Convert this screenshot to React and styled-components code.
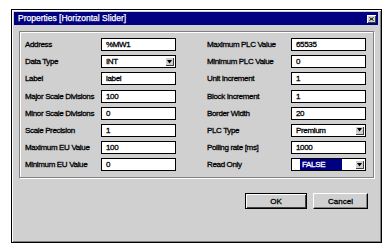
import React from "react";
import styled, { createGlobalStyle } from "styled-components";

const Global = createGlobalStyle`
  html, body { margin: 0; padding: 0; background: #ffffff; }
  body { font-family: "Liberation Sans", Arial, sans-serif; }
`;

const FACE = "#d0d0d0";

const Window = styled.div`
  box-sizing: border-box;
  margin: 9px 0 0 11px;
  width: 371px;
  height: 234px;
  background: ${FACE};
  border: 1px solid #000;
  box-shadow: inset 1px 1px 0 #ffffff, inset -1px -1px 0 #808080;
  padding: 2px;
  display: flex;
  flex-direction: column;
`;

const TitleBar = styled.div`
  height: 13px;
  margin-right: 1px;
  background: #000080;
  display: flex;
  align-items: center;
  justify-content: space-between;
  padding: 0 2px 0 4px;
`;

const Title = styled.span`
  color: #ffffff;
  font-size: 8.5px;
  line-height: 13px;
  white-space: nowrap;
  -webkit-text-stroke: 0.25px #ffffff;
`;

const CloseBtn = styled.div`
  box-sizing: border-box;
  width: 9px;
  height: 8px;
  margin-top: 1px;
  background: ${FACE};
  box-shadow: inset 1px 1px 0 #fff, inset -1px -1px 0 #404040;
  display: flex;
  align-items: center;
  justify-content: center;
`;

const Group = styled.div`
  box-sizing: border-box;
  margin: 6px 0 0 5px;
  width: 355px;
  height: 147px;
  border: 1px solid #808080;
  box-shadow: inset 1px 1px 0 #ffffff, 1px 1px 0 #ffffff;
  padding: 6px 0 0 5px;
  display: flex;
  gap: 31px;
`;

const Column = styled.div`
  display: grid;
  grid-template-columns: ${(p) => p.$label}px 75px;
  grid-auto-rows: 13px;
  row-gap: 4.2px;
  align-items: center;
`;

const Label = styled.div`
  font-size: 8px;
  letter-spacing: -0.35px;
  color: #000;
  white-space: nowrap;
  -webkit-text-stroke: 0.3px #000;
`;

const Field = styled.div`
  box-sizing: border-box;
  height: 13px;
  background: #fff;
  border: 1px solid #000;
  display: flex;
  align-items: center;
  font-size: 8px;
  letter-spacing: -0.35px;
  color: #000;
  -webkit-text-stroke: 0.3px #000;
  padding-left: ${(p) => (p.$select ? 0 : 4)}px;
  white-space: nowrap;
  overflow: hidden;
`;

const FieldText = styled.span`
  flex: 1;
  padding-left: 4px;
`;

const Selected = styled.span`
  margin-left: 8px;
  width: 42px;
  height: 100%;
  background: #000080;
  color: #fff;
  -webkit-text-stroke: 0.3px #fff;
  padding-left: 2px;
  box-sizing: border-box;
  display: flex;
  align-items: center;
  margin-right: auto;
`;

const ArrowBtn = styled.div`
  box-sizing: border-box;
  width: 9px;
  height: 9px;
  margin-right: 1px;
  background: ${FACE};
  box-shadow: inset 1px 1px 0 #fff, inset -1px -1px 0 #404040;
  display: flex;
  align-items: center;
  justify-content: center;
`;

const ButtonRow = styled.div`
  display: flex;
  justify-content: flex-end;
  gap: 6px;
  margin-top: 15px;
  padding-right: 11px;
`;

const Button = styled.div`
  box-sizing: border-box;
  width: ${(p) => p.$w}px;
  height: 16px;
  background: ${FACE};
  font-size: 8px;
  color: #000;
  -webkit-text-stroke: 0.3px #000;
  display: flex;
  align-items: center;
  justify-content: center;
  border: 1px solid;
  border-color: ${(p) => (p.$default ? "#000" : "#fff #000 #000 #fff")};
  box-shadow: ${(p) =>
    p.$default
      ? "inset 1px 1px 0 #fff, inset -1px -1px 0 #404040"
      : "inset -1px -1px 0 #808080"};
`;

const Arrow = () => (
  <svg width="5" height="4" viewBox="0 0 5 4">
    <polygon points="0,0 5,0 2.5,3.5" fill="#000" />
  </svg>
);

const CloseIcon = () => (
  <svg width="5" height="4" viewBox="0 0 5 4">
    <path d="M0.5 0.5 L4.5 3.5 M4.5 0.5 L0.5 3.5" stroke="#000" strokeWidth="1" />
  </svg>
);

const left = [
  ["Address", "%MW1"],
  ["Data Type", "INT", "select"],
  ["Label", "label"],
  ["Major Scale Divisions", "100"],
  ["Minor Scale Divisions", "0"],
  ["Scale Precision", "1"],
  ["Maximum EU Value", "100"],
  ["Minimum EU Value", "0"],
];

const right = [
  ["Maximum PLC Value", "65535"],
  ["Minimum PLC Value", "0"],
  ["Unit Increment", "1"],
  ["Block Increment", "1"],
  ["Border Width", "20"],
  ["PLC Type", "Premium", "select"],
  ["Polling rate [ms]", "1000"],
  ["Read Only", "FALSE", "selected"],
];

const renderRows = (rows) =>
  rows.map(([label, value, kind]) => (
    <React.Fragment key={label}>
      <Label>{label}</Label>
      {kind === "select" ? (
        <Field $select>
          <FieldText>{value}</FieldText>
          <ArrowBtn>
            <Arrow />
          </ArrowBtn>
        </Field>
      ) : kind === "selected" ? (
        <Field $select>
          <Selected>{value}</Selected>
          <ArrowBtn>
            <Arrow />
          </ArrowBtn>
        </Field>
      ) : (
        <Field>{value}</Field>
      )}
    </React.Fragment>
  ));

export default function App() {
  return (
    <>
      <Global />
      <Window>
        <TitleBar>
          <Title>Properties [Horizontal Slider]</Title>
          <CloseBtn>
            <CloseIcon />
          </CloseBtn>
        </TitleBar>
        <Group>
          <Column $label={76}>{renderRows(left)}</Column>
          <Column $label={84}>{renderRows(right)}</Column>
        </Group>
        <ButtonRow>
          <Button $default $w={62}>OK</Button>
          <Button $w={55}>Cancel</Button>
        </ButtonRow>
      </Window>
    </>
  );
}
